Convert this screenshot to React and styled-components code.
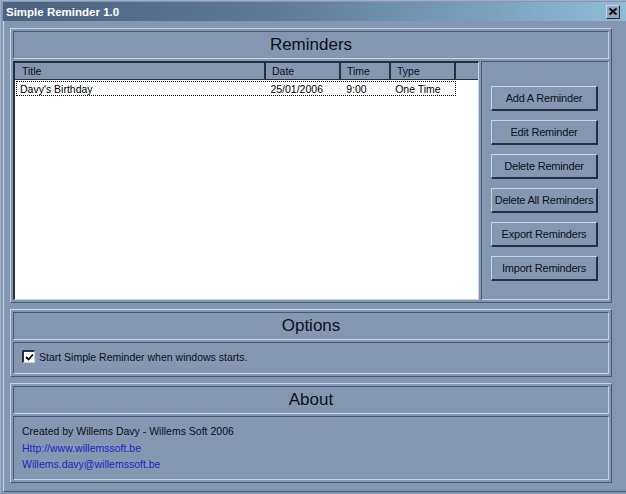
import styled, { createGlobalStyle } from "styled-components";

const BG = "#8597b0";
const LIGHT = "#c6d5e8";
const DARK = "#4a5970";
const DARKER = "#253041";

const GlobalStyle = createGlobalStyle`
  html, body {
    margin: 0;
    padding: 0;
    background: ${BG};
  }
  body {
    font-family: "Liberation Sans", Arial, sans-serif;
    font-size: 10.5px;
    color: #000;
  }
`;

const Window = styled.div`
  width: 626px;
  height: 494px;
  box-sizing: border-box;
  background: ${BG};
  display: flex;
  flex-direction: column;
  overflow: hidden;
  border-left: 1px solid #9fb0c6;
  border-top: 1px solid #9fb0c6;
  padding: 1px 0 0 2px;
`;

const TitleBar = styled.div`
  height: 19px;
  display: flex;
  align-items: center;
  justify-content: space-between;
  padding: 0 6px 0 3px;
  background: linear-gradient(to right, #4b6281 0%, #5f7b99 45%, #8dbcd9 100%);
`;

const Title = styled.span`
  color: #fff;
  font-weight: bold;
  font-size: 11.5px;
`;

const CloseButton = styled.button`
  width: 14px;
  height: 14px;
  padding: 0;
  margin: 0;
  box-sizing: border-box;
  background: #92a5bd;
  border-top: 1px solid ${LIGHT};
  border-left: 1px solid ${LIGHT};
  border-right: 1px solid ${DARKER};
  border-bottom: 1px solid ${DARKER};
  display: flex;
  align-items: center;
  justify-content: center;
`;

const Client = styled.div`
  flex: 1;
  display: flex;
  flex-direction: column;
  gap: 6px;
  padding: 7px 14px 0 6px;
  border-left: 1px solid ${LIGHT};
  margin-bottom: 2px;
  border-bottom: 1px solid ${DARK};
  box-sizing: border-box;
`;

const Group = styled.section`
  display: flex;
  flex-direction: column;
  gap: 2px;
  padding: 2px;
  border-top: 1px solid ${LIGHT};
  border-left: 1px solid ${LIGHT};
  border-right: 1px solid ${DARK};
  border-bottom: 1px solid ${DARK};
`;

const Sunken = styled.div`
  box-sizing: border-box;
  border-top: 1px solid ${DARK};
  border-left: 1px solid ${DARK};
  border-right: 1px solid ${LIGHT};
  border-bottom: 1px solid ${LIGHT};
`;

const Header = styled(Sunken)`
  height: 28px;
  display: flex;
  align-items: center;
  justify-content: center;
  font-size: 17px;
  color: #0c1018;
`;

const Content = styled(Sunken)`
  height: ${(p) => p.$h}px;
`;

const ReminderBody = styled.div`
  height: 239px;
  display: flex;
  gap: 2px;
`;

const List = styled.div`
  width: 466px;
  box-sizing: border-box;
  background: #fff;
  border-top: 2px solid ${DARKER};
  border-left: 2px solid ${DARKER};
  border-right: 1px solid ${LIGHT};
  border-bottom: 1px solid ${LIGHT};
  display: flex;
  flex-direction: column;
`;

const ColumnRow = styled.div`
  display: flex;
  height: 16px;
  background: ${BG};
  border-bottom: 1px solid ${DARKER};
`;

const ColumnHead = styled.div`
  box-sizing: border-box;
  width: ${(p) => p.$w}px;
  flex: ${(p) => (p.$w ? "none" : 1)};
  padding-left: ${(p) => p.$pad}px;
  display: flex;
  align-items: center;
  border-right: ${(p) => (p.$w ? `2px solid ${DARKER}` : "none")};
  color: #0c1018;
`;

const Row = styled.div`
  display: flex;
  height: 15px;
  width: 440px;
  box-sizing: border-box;
  margin: 1px 0 0 1px;
  border: 1px dotted #000;
`;

const Cell = styled.div`
  box-sizing: border-box;
  width: ${(p) => p.$w}px;
  padding-left: ${(p) => p.$pad}px;
  display: flex;
  align-items: center;
  white-space: nowrap;
`;

const ButtonPanel = styled(Sunken)`
  flex: 1;
  display: flex;
  flex-direction: column;
  gap: 9px;
  padding: 24px 0 0 9px;
`;

const Button = styled.button`
  width: 107px;
  height: 25px;
  box-sizing: border-box;
  padding: 0;
  background: ${BG};
  font-family: "Liberation Sans", Arial, sans-serif;
  font-size: 11px;
  letter-spacing: -0.2px;
  color: #0c1018;
  border-top: 1px solid ${LIGHT};
  border-left: 1px solid ${LIGHT};
  border-right: 2px solid ${DARKER};
  border-bottom: 2px solid ${DARKER};
`;

const OptionRow = styled.label`
  display: flex;
  align-items: center;
  gap: 4px;
  padding: 7px 0 0 8px;
  color: #0c1018;
`;

const CheckBox = styled.span`
  width: 13px;
  height: 13px;
  box-sizing: border-box;
  background: #fff;
  border-top: 2px solid ${DARKER};
  border-left: 2px solid ${DARKER};
  border-right: 1px solid ${LIGHT};
  border-bottom: 1px solid ${LIGHT};
  display: flex;
  align-items: center;
  justify-content: center;
`;

const AboutText = styled.div`
  padding: 6px 0 0 8px;
  line-height: 16.5px;
  color: #0c1018;
`;

const Link = styled.a`
  display: block;
  color: #1c22c8;
  text-decoration: none;
`;

const columns = [
  { label: "Title", w: 251, pad: 7 },
  { label: "Date", w: 75, pad: 6 },
  { label: "Time", w: 50, pad: 6 },
  { label: "Type", w: 65, pad: 6 },
];

const reminders = [
  { title: "Davy's Birthday", date: "25/01/2006", time: "9:00", type: "One Time" },
];

const actions = [
  "Add A Reminder",
  "Edit Reminder",
  "Delete Reminder",
  "Delete All Reminders",
  "Export Reminders",
  "Import Reminders",
];

export default function App() {
  return (
    <>
      <GlobalStyle />
      <Window>
        <TitleBar>
          <Title>Simple Reminder 1.0</Title>
          <CloseButton aria-label="Close">
            <svg width="8" height="7" viewBox="0 0 8 7">
              <path d="M0.5 0.5 L7.5 6.5 M7.5 0.5 L0.5 6.5" stroke="#000" strokeWidth="1.8" />
            </svg>
          </CloseButton>
        </TitleBar>
        <Client>
          <Group>
            <Header>Reminders</Header>
            <ReminderBody>
              <List>
                <ColumnRow>
                  {columns.map((c) => (
                    <ColumnHead key={c.label} $w={c.w} $pad={c.pad}>
                      {c.label}
                    </ColumnHead>
                  ))}
                  <ColumnHead />
                </ColumnRow>
                {reminders.map((r) => (
                  <Row key={r.title}>
                    <Cell $w={254} $pad={3}>{r.title}</Cell>
                    <Cell $w={76} $pad={0}>{r.date}</Cell>
                    <Cell $w={49} $pad={0}>{r.time}</Cell>
                    <Cell $w={60} $pad={0}>{r.type}</Cell>
                  </Row>
                ))}
              </List>
              <ButtonPanel>
                {actions.map((a) => (
                  <Button key={a}>{a}</Button>
                ))}
              </ButtonPanel>
            </ReminderBody>
          </Group>
          <Group>
            <Header>Options</Header>
            <Content $h={32}>
              <OptionRow>
                <CheckBox>
                  <svg width="9" height="9" viewBox="0 0 9 9">
                    <path d="M1 4 L3.5 6.5 L8 1.5" stroke="#000" strokeWidth="1.8" fill="none" />
                  </svg>
                </CheckBox>
                Start Simple Reminder when windows starts.
              </OptionRow>
            </Content>
          </Group>
          <Group>
            <Header>About</Header>
            <Content $h={64}>
              <AboutText>
                Created by Willems Davy - Willems Soft 2006
                <Link href="#">Http://www.willemssoft.be</Link>
                <Link href="#">Willems.davy@willemssoft.be</Link>
              </AboutText>
            </Content>
          </Group>
        </Client>
      </Window>
    </>
  );
}
